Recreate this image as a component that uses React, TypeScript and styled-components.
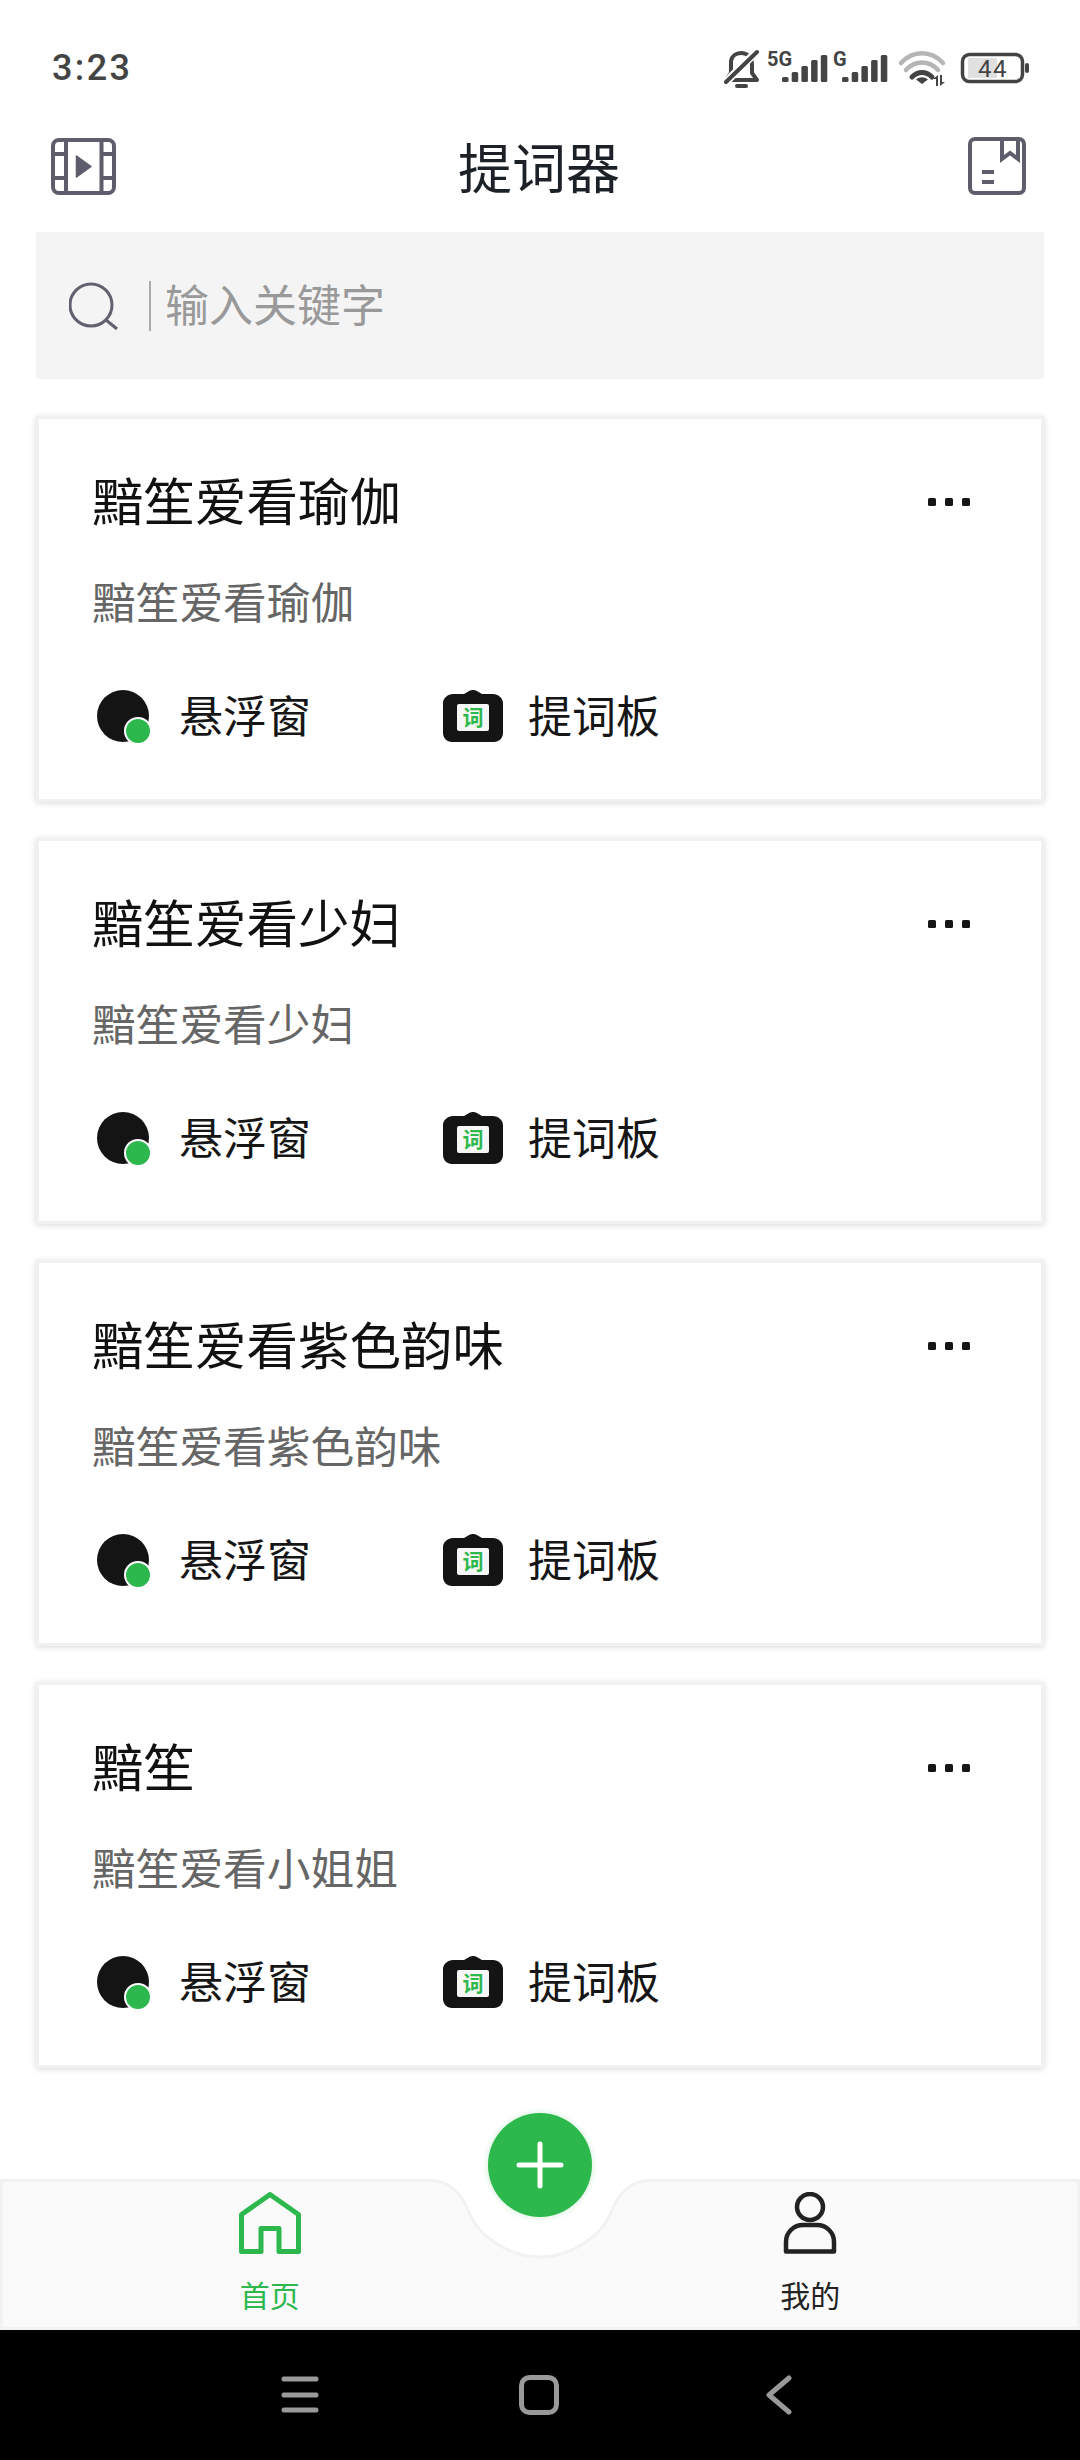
import React from "react";
import styled, { createGlobalStyle } from "styled-components";

const Global = createGlobalStyle`
  html, body { margin: 0; padding: 0; background: #fff; }
  * { box-sizing: border-box; }
`;
const CJK = `"Noto Sans CJK SC", "Noto Sans", sans-serif`;

const Page = styled.div`
  width: 1080px; height: 2460px; display: flex; flex-direction: column;
  background: #fff; font-family: ${CJK}; overflow: hidden;
`;
const StatusBar = styled.div`
  height: 100px; flex: none; display: flex; align-items: flex-start; justify-content: space-between;
`;
const Clock = styled.span`
  margin: 45px 0 0 52px; font: 500 36px/46px Roboto, sans-serif; letter-spacing: 2.4px; color: #444;
`;
const StatusIcons = styled.svg`
  display: block; margin: 40px 51px 0 0; width: 305px; height: 50px;
`;
const StatusLabel = styled.text`
  font-family: Roboto, sans-serif; font-weight: 700; font-size: 20px; fill: #444;
`;
const BatteryLabel = styled.text`
  font-family: Roboto, sans-serif; font-size: 24px; letter-spacing: 1.5px; fill: #444;
`;
const Header = styled.header`
  height: 132px; flex: none; display: flex; align-items: center; justify-content: space-between;
  padding: 0 54px 0 51px;
`;
const Title = styled.h1`
  margin: 0 6px 0 0; font-size: 54px; line-height: 70px; font-weight: 400; color: #1c2127;
`;
const Search = styled.div`
  flex: none; height: 147px; margin: 0 36px; background: #f4f4f4;
  display: flex; align-items: center; padding: 0 0 0 33px;
`;
const SearchDivider = styled.span`
  width: 2px; height: 50px; margin: 0 14px 0 30px; background: #aaa;
`;
const Placeholder = styled.span`
  font-size: 44px; line-height: 50px; color: #999; margin-top: -5px;
`;
const List = styled.main`
  display: flex; flex-direction: column; gap: 36px; padding: 37px 36px 0;
`;
const Card = styled.article`
  height: 386px; background: #fff; border: 3px solid #f1f1f1;
  box-shadow: 0 1px 6px rgba(0,0,0,.16); padding: 50px 53px 0;
`;
const CardHead = styled.div`
  display: flex; align-items: center; justify-content: space-between; padding-right: 18px;
`;
const CardTitle = styled.h2`
  margin: 0; font-size: 51.5px; line-height: 60px; font-weight: 400; color: #111;
`;
const Dots = styled.svg`
  display: block; position: relative; top: 3px;
`;
const CardDesc = styled.p`
  margin: 46px 0 0; font-size: 43.700px; line-height: 50px; color: #666;
`;
const CardActions = styled.div`
  display: flex; align-items: center; margin: 63px 0 0 5px; height: 56px;
`;
const Action = styled.div<{ $w?: number; $gap: number }>`
  display: flex; align-items: center; gap: ${p => p.$gap}px; width: ${p => (p.$w ? `${p.$w}px` : "auto")};
  font-size: 44px; line-height: 50px; color: #161616;
`;
const ActionText = styled.span`
  margin-top: -5px;
`;
const Avatar = styled.span`
  position: relative; display: block; width: 52px; height: 52px; border-radius: 50%; background: #141414; flex: none;
`;
const Online = styled.span`
  position: absolute; right: -2.5px; bottom: -2.5px; width: 28px; height: 28px; border-radius: 50%;
  background: #2db84d; border: 2.5px solid #fff;
`;
const TileLabel = styled.text`
  font-family: ${CJK}; font-weight: 700; font-size: 21px; fill: #2db84d;
`;
const TabBar = styled.nav`
  position: relative; flex: none; height: 151px; margin-top: auto; display: flex;
  background: #fafafa; border: 3px solid #f2f2f2;
`;
const Tab = styled.div<{ $active?: boolean; $nudge: number }>`
  flex: 1; display: flex; flex-direction: column; align-items: center; padding-top: 10px;
  padding-left: ${p => Math.max(p.$nudge, 0)}px; padding-right: ${p => Math.max(-p.$nudge, 0)}px;
  color: ${p => (p.$active ? "#2db84d" : "#222")};
`;
const TabIcon = styled.svg`
  display: block; width: 62px; height: 62px;
`;
const TabLabel = styled.span`
  margin-top: 20px; font-size: 30px; line-height: 40px;
`;
const Notch = styled.svg`
  position: absolute; left: 417px; top: -3px; width: 240px; height: 84px;
`;
const Fab = styled.button`
  position: absolute; left: 485px; top: -69px; width: 104px; height: 104px; padding: 0; border: 0;
  border-radius: 50%; background: #2db84d; display: flex; align-items: center; justify-content: center;
  box-shadow: 0 0 6px rgba(45,184,77,.25);
`;
const SystemNav = styled.div`
  flex: none; height: 130px; background: #000; display: flex; align-items: flex-start;
  padding: 45px 0 0 281px; gap: 200px;
`;
const NavIcon = styled.svg<{ $shift?: number }>`
  display: block; height: 40px; margin-left: ${p => p.$shift ?? 0}px;
`;

const Bars = ({ x }: { x: number }) => (
  <g fill="#444">
    {[5, 10, 16, 22, 27].map((h, i) => (
      <rect key={i} x={x + i * 9.7} y={32 - h} width={6.5} height={h} rx={1.5} />
    ))}
  </g>
);

const StatusGlyphs = () => (
  <StatusIcons viewBox="0 -10 305 50">
    <g fill="none" stroke="#444" strokeWidth="4" strokeLinecap="round" strokeLinejoin="round">
      <path d="M2 30h31l-5-7V15C28 7 23 3 17 3 12 3 8 6 7 11v12l-5 7z" />
      <path d="M3 31 32 2" stroke="#fff" strokeWidth="8" />
      <path d="M2 32 33 2" />
      <path d="M13 36h9" />
    </g>
    <StatusLabel x="43" y="16">5G</StatusLabel>
    <Bars x={58} />
    <StatusLabel x="109" y="16">G</StatusLabel>
    <Bars x={118} />
    <g fill="none" strokeLinecap="round">
      <path d="M177 13C189 0 207 0 219 13" stroke="#b5b5b5" strokeWidth="4.5" />
      <path d="M182 20C191 10 205 10 214 20" stroke="#b5b5b5" strokeWidth="4.5" />
      <path d="M188 27C194 21 202 21 208 27" stroke="#444" strokeWidth="5" />
    </g>
    <path d="M192 29.500C196 26.500 200 26.500 204 29.500L198 34z" fill="#444" />
    <path d="M212 36v-7h-3l5-4 0 11zM216 25h2l0 7h3l-5 4z" fill="#444" />
    <rect x="238.500" y="4.500" width="60" height="27" rx="7" fill="none" stroke="#444" strokeWidth="3.500" />
    <path d="M244 8h29v20h-29z" fill="#e0e0e0" />
    <BatteryLabel x="254" y="27">44</BatteryLabel>
    <rect x="301" y="13" width="4" height="10" rx="2" fill="#444" />
  </StatusIcons>
);

const FilmIcon = () => (
  <svg width="65" height="57" viewBox="0 0 65 57" fill="none" stroke="#5d5d6b" strokeWidth="4">
    <rect x="2" y="2" width="61" height="53" rx="6" />
    <path d="M15 2v53M50.500 2v53M2 16h13M2 40h13M50.500 16H63M50.500 40H63" />
    <path d="M25.500 18 40 28.500 25.500 39z" fill="#5d5d6b" stroke="#5d5d6b" strokeWidth="1.500" strokeLinejoin="round" />
  </svg>
);
const BookIcon = () => (
  <svg width="58" height="58" viewBox="0 0 58 58" fill="none" stroke="#5d5d6b" strokeWidth="4">
    <rect x="2" y="2" width="54" height="54" rx="5" />
    <path d="M34 2v20l8-6 8 6V2M14 35h12M14 45h12" />
  </svg>
);
const SearchIcon = () => (
  <svg width="50" height="48" viewBox="0 0 50 48" fill="none" stroke="#60606e" strokeWidth="3">
    <circle cx="22" cy="23" r="21" />
    <path d="M37 38 48 47" />
  </svg>
);
const CameraIcon = () => (
  <svg width="60" height="52" viewBox="0 0 60 52">
    <path d="M10 4h11l6-3.500c2-.7 4-.7 6 0L39 4h11c5 0 10 4 10 9v30c0 5-4 9-9 9H9c-5 0-9-4-9-9V13c0-5 5-9 10-9z" fill="#141414" />
    <rect x="14" y="14" width="32" height="27" rx="2" fill="#f7f7f7" />
    <TileLabel x="30" y="35" textAnchor="middle">词</TileLabel>
  </svg>
);
const HomeIcon = () => (
  <TabIcon viewBox="0 0 62 62" fill="none" stroke="currentColor" strokeWidth="5" strokeLinejoin="round">
    <path d="M31 2.500 59.500 22.500v37H40V36.500H22v23H2.500v-37z" />
  </TabIcon>
);
const PersonIcon = () => (
  <TabIcon viewBox="0 0 62 62" fill="none" stroke="currentColor" strokeWidth="4.5" strokeLinejoin="round">
    <circle cx="31" cy="15" r="13" />
    <path d="M7 59.500V50c0-10 8-17 17-17h14c9 0 17 7 17 17v9.500z" />
  </TabIcon>
);

const items = [
  { title: "黯笙爱看瑜伽", desc: "黯笙爱看瑜伽" },
  { title: "黯笙爱看少妇", desc: "黯笙爱看少妇" },
  { title: "黯笙爱看紫色韵味", desc: "黯笙爱看紫色韵味" },
  { title: "黯笙", desc: "黯笙爱看小姐姐" },
];

export default function App() {
  return (
    <Page>
      <Global />
      <StatusBar>
        <Clock>3:23</Clock>
        <StatusGlyphs />
      </StatusBar>
      <Header>
        <FilmIcon />
        <Title>提词器</Title>
        <BookIcon />
      </Header>
      <Search>
        <SearchIcon />
        <SearchDivider />
        <Placeholder>输入关键字</Placeholder>
      </Search>
      <List>
        {items.map((it, i) => (
          <Card key={i}>
            <CardHead>
              <CardTitle>{it.title}</CardTitle>
              <Dots width="42" height="8" viewBox="0 0 42 8" fill="#161616">
                <rect width="8" height="8" rx="1.500" />
                <rect x="17" width="8" height="8" rx="1.500" />
                <rect x="34" width="8" height="8" rx="1.500" />
              </Dots>
            </CardHead>
            <CardDesc>{it.desc}</CardDesc>
            <CardActions>
              <Action $w={346} $gap={30}>
                <Avatar><Online /></Avatar>
                <ActionText>悬浮窗</ActionText>
              </Action>
              <Action $gap={25}>
                <CameraIcon />
                <ActionText>提词板</ActionText>
              </Action>
            </CardActions>
          </Card>
        ))}
      </List>
      <TabBar>
        <Tab $active $nudge={-4}>
          <HomeIcon />
          <TabLabel>首页</TabLabel>
        </Tab>
        <Tab $nudge={3}>
          <PersonIcon />
          <TabLabel>我的</TabLabel>
        </Tab>
        <Notch viewBox="0 0 240 84">
          <path d="M10 0H230V2C212 2 198 14 192 31 182 58 150 78 120 78 90 78 58 58 48 31 42 14 28 2 10 2z" fill="#fff" />
          <path d="M10 1.500C28 1.500 42 14 48 31 58 58 90 78 120 78 150 78 182 58 192 31 198 14 212 1.500 230 1.500" fill="none" stroke="#f2f2f2" strokeWidth="3" />
        </Notch>
        <Fab aria-label="add">
          <svg width="48" height="48" viewBox="0 0 48 48" stroke="#fff" strokeWidth="5" strokeLinecap="round">
            <path d="M24 3v42M3 24h42" />
          </svg>
        </Fab>
      </TabBar>
      <SystemNav>
        <NavIcon width="38" viewBox="0 0 38 40" stroke="#999" strokeWidth="5" strokeLinecap="round">
          <path d="M3 4h32M3 20h32M3 35h32" />
        </NavIcon>
        <NavIcon width="40" viewBox="0 0 40 40" fill="none" stroke="#999" strokeWidth="5">
          <rect x="2.500" y="2.500" width="35" height="35" rx="8" />
        </NavIcon>
        <NavIcon $shift={7} width="26" viewBox="0 0 26 40" fill="none" stroke="#999" strokeWidth="5" strokeLinecap="round" strokeLinejoin="round">
          <path d="M23 3 3 20l20 17" />
        </NavIcon>
      </SystemNav>
    </Page>
  );
}
